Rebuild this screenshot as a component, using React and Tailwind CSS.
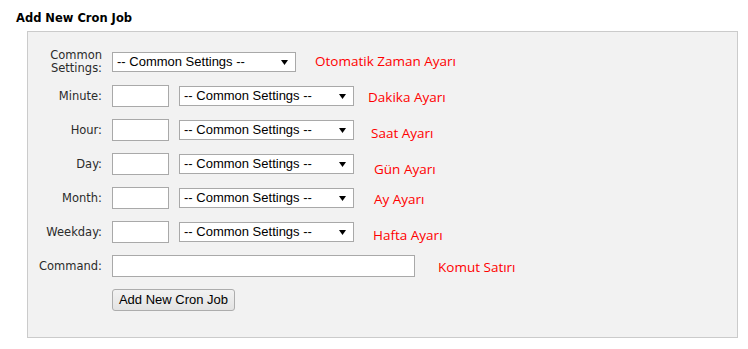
import React from "react";

const labelFont = { fontFamily: '"DejaVu Sans", Verdana, sans-serif' };

function Arrow() {
  return (
    <svg width="7" height="5" viewBox="0 0 7 5" className="shrink-0">
      <polygon points="0,0 7,0 3.5,5" fill="#000" />
    </svg>
  );
}

function FakeSelect({ w }) {
  return (
    <div
      className={`${w} h-[20px] shrink-0 border border-[#a9a9a9] bg-white flex items-center justify-between pl-[4px] pr-[7px] font-['Liberation_Sans',Arial,sans-serif] text-[13px] leading-[16px] text-black`}
    >
      <span className="whitespace-nowrap">-- Common Settings --</span>
      <Arrow />
    </div>
  );
}

function Note({ children, cls }) {
  return (
    <span
      className={`whitespace-nowrap font-['Open_Sans','Noto_Sans',sans-serif] text-[13.5px] leading-[18px] text-[#ff0000] ${cls}`}
    >
      {children}
    </span>
  );
}

function Label({ children }) {
  return (
    <div
      className="w-[74px] shrink-0 text-right text-[11.5px] leading-[13px] text-[#2b2b2b]"
      style={labelFont}
    >
      {children}
    </div>
  );
}

function FieldRow({ label, note, noteCls }) {
  return (
    <div className="flex items-center h-[22px]">
      <Label>{label}</Label>
      <div className="ml-[10px] w-[57px] h-[22px] shrink-0 border border-[#a9a9a9] bg-white" />
      <div className="ml-[10px]">
        <FakeSelect w="w-[175px]" />
      </div>
      <Note cls={noteCls}>{note}</Note>
    </div>
  );
}

export default function App() {
  return (
    <div className="w-[748px] h-[349px] bg-white overflow-hidden">
      <div className="pt-[11px] pl-[16px]">
        <div
          className="text-[11.5px] leading-[14px] font-bold text-black"
          style={labelFont}
        >
          Add New Cron Job
        </div>
      </div>
      <div className="mt-[6px] ml-[27px] w-[711px] border border-[#cbcbcb] bg-[#f2f2f2] pt-[19px] pb-[26px] flex flex-col gap-[12px]">
        <div className="flex items-center h-[22px]">
          <Label>
            Common
            <br />
            Settings:
          </Label>
          <div className="ml-[10px]">
            <FakeSelect w="w-[184px]" />
          </div>
          <Note cls="ml-[19px] mb-[3px]">Otomatik Zaman Ayarı</Note>
        </div>
        <FieldRow label="Minute:" note="Dakika Ayarı" noteCls="ml-[14px] mt-[2px]" />
        <FieldRow label="Hour:" note="Saat Ayarı" noteCls="ml-[17px] mt-[5px]" />
        <FieldRow label="Day:" note="Gün Ayarı" noteCls="ml-[20px] mt-[10px]" />
        <FieldRow label="Month:" note="Ay Ayarı" noteCls="ml-[20px] mt-[2px]" />
        <FieldRow label="Weekday:" note="Hafta Ayarı" noteCls="ml-[19px] mt-[6px]" />
        <div className="flex items-center h-[22px]">
          <Label>Command:</Label>
          <div className="ml-[10px] w-[303px] h-[22px] shrink-0 border border-[#a9a9a9] bg-white" />
          <Note cls="ml-[23px] mt-[1px]">Komut Satırı</Note>
        </div>
        <div className="flex items-center h-[22px]">
          <div className="w-[74px] shrink-0" />
          <button className="ml-[10px] w-[123px] h-[22px] border border-[#adadad] rounded-[3px] bg-gradient-to-b from-[#f2f2f2] to-[#e3e3e3] font-['Liberation_Sans',Arial,sans-serif] text-[13px] leading-[16px] text-black flex items-center justify-center">
            Add New Cron Job
          </button>
        </div>
      </div>
    </div>
  );
}
